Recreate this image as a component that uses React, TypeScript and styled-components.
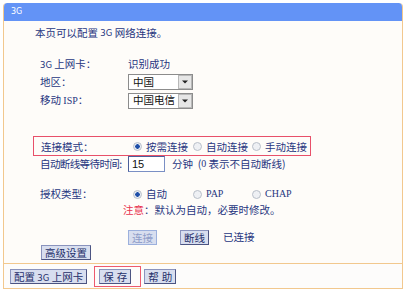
import styled, { createGlobalStyle } from 'styled-components';

const Global = createGlobalStyle`
  html, body { margin: 0; padding: 0; background: #ffffff; }
  body { font-family: "Noto Sans CJK SC", "DejaVu Sans", sans-serif; }
`;

const Page = styled.div`
  width: 405px;
  height: 291px;
  box-sizing: border-box;
  padding: 3px 2px 2px 3px;
  background: #ffffff;
`;

const Panel = styled.div`
  height: 286px;
  box-sizing: border-box;
  border: 1px solid #f2c88e;
  border-top: none;
  border-radius: 4px 4px 0 0;
  display: flex;
  flex-direction: column;
  overflow: hidden;
`;

const Header = styled.div`
  height: 18px;
  background: #6393f6;
  border-radius: 4px 4px 0 0;
  color: #ffffff;
  font-family: "DejaVu Sans", sans-serif;
  font-size: 8px;
  line-height: 18px;
  padding-left: 8px;
  margin: 0 -1px;
`;

const Body = styled.div`
  flex: 1;
  background: #fefcf9;
  padding: 3px 0 0 29px;
  display: flex;
  flex-direction: column;
  color: #27367f;
  font-size: 10.5px;
`;

const Row = styled.div<{ $h: number; $mt?: number; $pl?: number }>`
  height: ${(p) => p.$h}px;
  margin-top: ${(p) => p.$mt ?? 0}px;
  padding-left: ${(p) => p.$pl ?? 0}px;
  display: flex;
  align-items: center;
  line-height: 1;
  white-space: nowrap;
`;

const Label = styled.span<{ $w?: number; $tight?: boolean }>`
  width: ${(p) => p.$w ?? 95}px;
  box-sizing: border-box;
  padding-left: 7px;
  flex: none;
  letter-spacing: ${(p) => (p.$tight ? '-0.6px' : 'normal')};
`;

const Latin = styled.span`
  font-family: "DejaVu Sans", sans-serif;
  font-size: 8.5px;
`;

const Mono = styled.span`
  font-family: "Liberation Serif", serif;
  font-size: 10px;
`;

const Select = styled.div`
  width: 65px;
  height: 16px;
  box-sizing: border-box;
  border: 1px solid #8c8c8c;
  background: #ffffff;
  display: flex;
  align-items: center;
  color: #111;
  font-size: 10.5px;
  padding-left: 4px;
  justify-content: space-between;
`;

const Arrow = styled.div`
  width: 14px;
  height: 14px;
  box-sizing: border-box;
  border: 1px solid #b8b8b8;
  background: #e6e6e6;
  display: flex;
  align-items: center;
  justify-content: center;
`;

const RedBox = styled.div`
  height: 20px;
  margin-top: 26px;
  width: 278px;
  box-sizing: border-box;
  border: 1px solid #e8506a;
  display: flex;
  align-items: center;
  white-space: nowrap;
`;

const Radio = styled.span<{ $on?: boolean }>`
  width: 9px;
  height: 9px;
  box-sizing: border-box;
  border-radius: 50%;
  border: 1px solid #b9bfc9;
  background: ${(p) =>
    p.$on ? 'radial-gradient(circle, #1f4fa8 0 2px, #e8edf5 2.5px)' : '#eef0f4'};
  margin-right: 4px;
  flex: none;
`;

const Option = styled.span<{ $w?: number }>`
  display: inline-flex;
  align-items: center;
  width: ${(p) => (p.$w ? `${p.$w}px` : 'auto')};
  flex: none;
`;

const Input = styled.div`
  width: 37px;
  height: 16px;
  box-sizing: border-box;
  border: 1px solid #7a8fc4;
  border-top-color: #4b5f9a;
  border-left-color: #4b5f9a;
  background: #fff;
  color: #111;
  font-family: "Liberation Sans", sans-serif;
  font-size: 11px;
  line-height: 14px;
  padding-left: 3px;
  margin-right: 7px;
  flex: none;
`;

const Warn = styled.span`
  color: #e8334f;
`;

const Btn = styled.button<{ $off?: boolean; $ml?: number; $ls?: number }>`
  height: 15px;
  box-sizing: border-box;
  margin: 0 0 0 ${(p) => p.$ml ?? 0}px;
  padding: 0 ${(p) => 3 - (p.$ls ?? 0)}px 0 3px;
  font-family: "Noto Sans CJK SC", sans-serif;
  font-size: 10.5px;
  line-height: 13px;
  letter-spacing: ${(p) => p.$ls ?? 0}px;
  background: #d8deef;
  color: ${(p) => (p.$off ? '#8d9bc8' : '#26306a')};
  border: 1px solid ${(p) => (p.$off ? '#9cb0dd' : '#4c5482')};
  border-top-color: ${(p) => (p.$off ? '#9cb0dd' : '#8a93bd')};
  border-left-color: ${(p) => (p.$off ? '#9cb0dd' : '#8a93bd')};
  border-radius: 0;
  cursor: default;
  flex: none;
`;

const Footer = styled.div`
  height: 24px;
  border-top: 1px solid #f2c88e;
  background: #fdfcfb;
  display: flex;
  align-items: center;
  padding-left: 6px;
`;

const SaveFrame = styled.div`
  height: 21px;
  box-sizing: border-box;
  border: 1px solid #ee5a6e;
  padding: 0 9px 0 4px;
  display: flex;
  align-items: center;
  margin: 0 3px 0 7px;
`;

function DropArrow() {
  return (
    <Arrow>
      <svg width="6" height="4" viewBox="0 0 6 4">
        <path d="M0 0.5h6L3 3.5z" fill="#222" />
      </svg>
    </Arrow>
  );
}

export default function App() {
  return (
    <Page>
      <Global />
      <Panel>
        <Header>3G</Header>
        <Body>
          <Row $h={18} $pl={2}>
            本页可以配置&nbsp;<Latin>3G</Latin>&nbsp;网络连接。
          </Row>
          <Row $h={18} $mt={13}>
            <Label>
              <Latin>3G</Latin> 上网卡：
            </Label>
            识别成功
          </Row>
          <Row $h={18}>
            <Label>地区：</Label>
            <Select>
              中国
              <DropArrow />
            </Select>
          </Row>
          <Row $h={19}>
            <Label>
              移动 <Mono>ISP</Mono>：
            </Label>
            <Select>
              中国电信
              <DropArrow />
            </Select>
          </Row>
          <RedBox>
            <Label $w={99}>连接模式：</Label>
            <Option $w={60}>
              <Radio $on />
              按需连接
            </Option>
            <Option $w={59}>
              <Radio />
              自动连接
            </Option>
            <Option>
              <Radio />
              手动连接
            </Option>
          </RedBox>
          <Row $h={16}>
            <Label $tight>自动断线等待时间:</Label>
            <Input>15</Input>
            分钟&nbsp;&nbsp;(<Mono>0</Mono>&nbsp;表示不自动断线)
          </Row>
          <Row $h={16} $mt={14}>
            <Label $w={100}>授权类型：</Label>
            <Option $w={60}>
              <Radio $on />
              自动
            </Option>
            <Option $w={59}>
              <Radio />
              <Mono>PAP</Mono>
            </Option>
            <Option>
              <Radio />
              <Mono>CHAP</Mono>
            </Option>
          </Row>
          <Row $h={17} $pl={90}>
            <Warn>注意</Warn>：默认为自动，必要时修改。
          </Row>
          <Row $h={16} $mt={10} $pl={95}>
            <Btn $off>连接</Btn>
            <Btn $ml={23}>断线</Btn>
            <span style={{ marginLeft: 14 }}>已连接</span>
          </Row>
          <Row $h={15} $pl={8}>
            <Btn>高级设置</Btn>
          </Row>
        </Body>
        <Footer>
          <Btn>
            配置 <Latin>3G</Latin> 上网卡
          </Btn>
          <SaveFrame>
            <Btn $ls={3}>保存</Btn>
          </SaveFrame>
          <Btn $ls={3}>帮助</Btn>
        </Footer>
      </Panel>
    </Page>
  );
}
